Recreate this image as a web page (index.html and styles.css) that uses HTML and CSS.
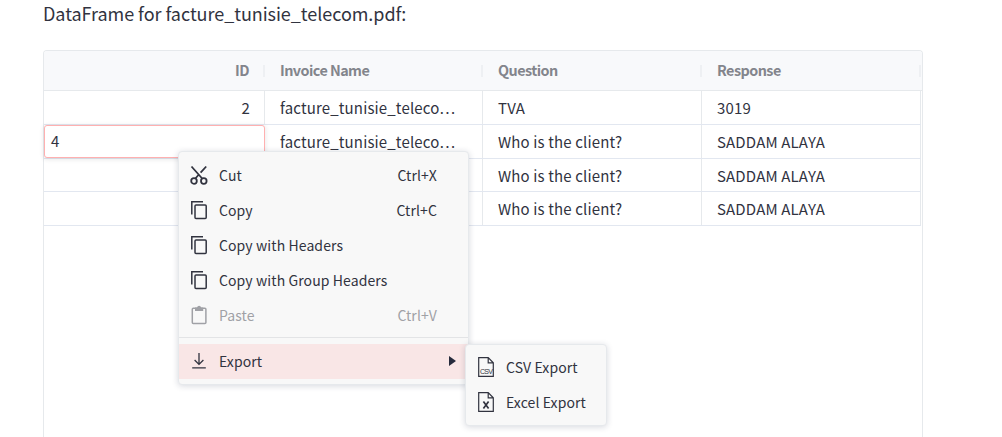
FILE: index.html
```html
<!DOCTYPE html>
<html lang="en">
<head>
<meta charset="utf-8">
<title>DataFrame</title>
<link rel="stylesheet" href="styles.css">
</head>
<body>
<svg class="defs" aria-hidden="true">
  <symbol id="copy" viewBox="0 0 18 20"><path d="M1.8 14.5V1.7H13" /><rect x="5" y="5" width="11.2" height="13.6" rx="1" /></symbol>
</svg>
<main class="page">
  <p class="title">DataFrame for facture_tunisie_telecom.pdf:</p>
  <section class="grid">
    <div class="row head">
      <div class="cell num">ID</div><div class="cell">Invoice Name</div><div class="cell">Question</div><div class="cell">Response</div>
    </div>
    <div class="row"><div class="cell num">2</div><div class="cell">facture_tunisie_teleco…</div><div class="cell">TVA</div><div class="cell">3019</div></div>
    <div class="row"><div class="cell edit"><div class="editor">4</div></div><div class="cell">facture_tunisie_teleco…</div><div class="cell">Who is the client?</div><div class="cell">SADDAM ALAYA</div></div>
    <div class="row short"><div class="cell num"></div><div class="cell"></div><div class="cell">Who is the client?</div><div class="cell">SADDAM ALAYA</div></div>
    <div class="row"><div class="cell num"></div><div class="cell"></div><div class="cell">Who is the client?</div><div class="cell">SADDAM ALAYA</div></div>
  </section>
</main>

<div class="menu context">
  <div class="item"><svg class="icon cut" viewBox="0 0 18 20"><path d="M1.5 1.5L12.2 13.5M16.2 1.5L10.6 7.6M8.4 10L5.4 13.5"/><circle cx="4" cy="16" r="2.8"/><circle cx="13.8" cy="16" r="2.8"/></svg><span class="label">Cut</span><span class="key">Ctrl+X</span></div>
  <div class="item"><svg class="icon"><use href="#copy"/></svg><span class="label">Copy</span><span class="key">Ctrl+C</span></div>
  <div class="item"><svg class="icon"><use href="#copy"/></svg><span class="label">Copy with Headers</span></div>
  <div class="item"><svg class="icon"><use href="#copy"/></svg><span class="label">Copy with Group Headers</span></div>
  <div class="item disabled"><svg class="icon" viewBox="0 0 18 20"><rect x="2.3" y="3.2" width="13.6" height="15.2" rx="1"/><path class="solid" d="M5 2.4H7A2.2 2.2 0 0 1 11.2 2.4H13.2V6H5Z"/></svg><span class="label">Paste</span><span class="key">Ctrl+V</span></div>
  <div class="separator"></div>
  <div class="item active"><svg class="icon download" viewBox="0 0 18 20"><path d="M9 2V13.2M4.6 9L9 13.4L13.4 9M2.2 16.8H15.8"/></svg><span class="label">Export</span><svg class="arrow" viewBox="0 0 7 10"><path d="M0 0L7 5L0 10Z"/></svg></div>
</div>

<div class="menu submenu">
  <div class="item"><svg class="icon file" viewBox="0 0 18 20"><path d="M1.7 .7H11.2L16.3 5.8V19.3H1.7ZM11.2 .7V5.8H16.3"/><text x="9.1" y="16.6" class="csv">CSV</text></svg><span class="label">CSV Export</span></div>
  <div class="item"><svg class="icon file" viewBox="0 0 18 20"><path d="M1.7 .7H11.2L16.3 5.8V19.3H1.7ZM11.2 .7V5.8H16.3"/><path class="x" d="M6.4 9.6L11.6 16.4M11.6 9.6L6.4 16.4"/></svg><span class="label">Excel Export</span></div>
</div>
</body>
</html>
```
FILE: styles.css
```css
* { box-sizing: border-box; }
body {
  margin: 0;
  height: 437px;
  overflow: hidden;
  background: #fff;
  color: #31333f;
  font-family: "Noto Sans CJK SC", "Noto Sans", sans-serif;
  font-size: 15px;
  letter-spacing: .15px;
}
.defs { position: absolute; width: 0; height: 0; }
.page { padding: 0 79px 0 43px; }
.title { margin: 0; height: 50px; line-height: 27px; font-size: 18px; letter-spacing: -.05px; white-space: nowrap; }

.grid {
  width: 880px;
  height: 387px;
  border: 1px solid #e6e9ec;
  border-bottom: 0;
  border-radius: 4px 4px 0 0;
}
.row {
  display: grid;
  grid-template-columns: 221px 218px 219px 219px;
  width: 877px;
  height: 34px;
  border-bottom: 1px solid #e2e7f0;
}
.row.short { height: 33px; }
.row.head {
  width: 878px;
  height: 40px;
  background: #f8f9fb;
  border-color: #e6e9ec;
  border-radius: 3px 3px 0 0;
  color: #83858c;
  font-size: 14.4px;
  font-weight: 700;
  letter-spacing: -.55px;
}
.cell {
  display: flex;
  align-items: center;
  min-width: 0;
  padding: 0 15px 1px;
  border-right: 1px solid #e6e9ec;
  white-space: nowrap;
}
.short .cell { padding-top: 1px; padding-bottom: 0; }
.num { justify-content: flex-end; padding-right: 14px; }
.head .cell {
  border-right: 0;
  padding-bottom: 2px;
  background: linear-gradient(#eef0f3, #eef0f3) right 0 center / 2px 12px no-repeat;
}
.head .num { padding-right: 16px; }
.cell.edit { padding: 0; border: 0; }
.editor {
  position: relative;
  display: flex;
  align-items: center;
  width: 221px;
  height: 33px;
  padding: 0 0 2px 6px;
  background: #fff;
  border: 1px solid #ffb0b0;
  border-radius: 3px;
  box-shadow: 0 1px 4px 1px rgba(0, 0, 0, .08);
}

.menu {
  position: absolute;
  padding: 6px 0 5px;
  background: #f8f8f8;
  border: 1px solid #e6e9ec;
  border-radius: 4px;
  box-shadow: 0 1px 6px rgba(30, 40, 70, .18);
  font-size: 14px;
  letter-spacing: .1px;
}
.context { left: 178px; top: 151px; width: 291px; }
.submenu { left: 465px; top: 344px; width: 142px; padding-top: 5px; }
.item { display: flex; align-items: center; height: 35px; padding: 0 31px 2px 11px; white-space: nowrap; }
.submenu .item { padding-right: 0; }
.label { flex: 1; margin-left: 11px; }
.disabled { color: #a0a1a6; }
.active { background: #f9e6e6; padding-right: 12px; }
.separator { height: 11px; padding-top: 4px; }
.separator::before { content: ""; display: block; height: 1px; background: #e3e4e6; }
.icon {
  flex: none;
  width: 18px;
  height: 20px;
  fill: none;
  stroke: currentColor;
  stroke-width: 1.5;
}
.cut { stroke-width: 1.8; }
.download { stroke-width: 1.3; }
.file { stroke-width: 1.2; }
.icon .solid { fill: currentColor; stroke: none; }
.icon .x { stroke-width: 1.7; }
.csv {
  fill: currentColor;
  stroke: none;
  font: 7px "Liberation Sans", sans-serif;
  letter-spacing: -.7px;
  text-anchor: middle;
}
.arrow { width: 7px; height: 10px; fill: #262b3c; }
```
